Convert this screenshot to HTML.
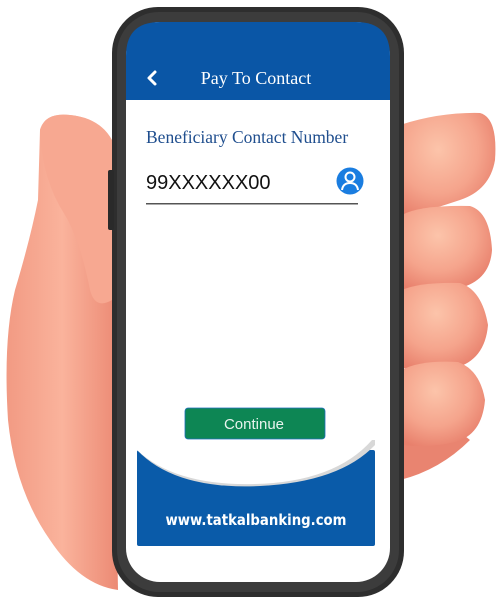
<!DOCTYPE html>
<html><head><style>
html,body{margin:0;padding:0;background:#fff;width:500px;height:600px;overflow:hidden}
</style></head><body>
<svg width="500" height="600" viewBox="0 0 500 600" xmlns="http://www.w3.org/2000/svg">
<defs>
<radialGradient id="sk" cx="0.4" cy="0.35" r="0.7">
<stop offset="0" stop-color="#fcc4aa"/><stop offset="0.6" stop-color="#f5a48c"/><stop offset="1" stop-color="#e8806c"/>
</radialGradient>
<linearGradient id="palm" x1="0" x2="1" y1="0" y2="0">
<stop offset="0" stop-color="#f29a83"/><stop offset="0.5" stop-color="#fab39c"/><stop offset="1" stop-color="#ec8a74"/>
</linearGradient>
</defs>
<path d="M40 130 Q45 112 70 115 Q100 118 110 140 L118 590 Q80 585 50 540 Q15 490 8 420 Q3 340 15 290 Q30 240 38 200 Z" fill="url(#palm)"/>
<path d="M40 130 Q45 112 70 115 Q100 118 112 140 L112 300 Q95 310 90 290 Q80 240 65 215 Q42 180 40 130Z" fill="#f7a891"/>
<path d="M400 420 L400 480 Q440 470 470 440 L420 400Z" fill="#e98470"/>
<path d="M400 125 Q440 112 480 113 Q498 118 495 160 Q490 190 460 200 Q430 210 402 218Z" fill="url(#sk)"/>
<path d="M402 215 Q420 205 470 206 Q490 212 492 250 Q490 280 460 288 Q430 292 402 290Z" fill="url(#sk)"/>
<path d="M402 290 Q420 282 460 283 Q482 290 488 325 Q485 360 455 368 Q430 372 402 368Z" fill="url(#sk)"/>
<path d="M402 370 Q420 360 458 362 Q480 370 485 400 Q482 435 455 442 Q430 448 402 445Z" fill="url(#sk)"/>
<rect x="112" y="7" width="292" height="590" rx="46" fill="#2e2e2e"/>
<rect x="117" y="12" width="282" height="580" rx="42" fill="#3c3c3c"/>
<rect x="108" y="170" width="6" height="60" rx="2" fill="#2a2a2a"/>
<rect x="126" y="22" width="264" height="560" rx="34" fill="#fff"/>
<path d="M126 100 L126 56 Q126 22 160 22 L356 22 Q390 22 390 56 L390 100Z" fill="#0a56a6"/>
<rect x="137" y="450" width="238" height="96" rx="2" fill="#0a5ba9"/>
<path d="M137 450 Q175 490 260 486 Q340 482 375 445 L375 440 L137 440Z" fill="#d8d8d8"/>
<path d="M137 450 Q175 486 255 484 Q335 482 372 440 L137 440Z" fill="#fff"/>
<path d="M155 72 L149 78 L155 84" stroke="#fff" stroke-width="3" fill="none" stroke-linecap="round" stroke-linejoin="round"/>
<text x="256" y="84" text-anchor="middle" font-family="Liberation Serif, serif" font-size="18" fill="#fff">Pay To Contact</text>
<text x="146" y="143" font-family="Liberation Serif, serif" font-size="17.5" fill="#1f4e8e">Beneficiary Contact Number</text>
<text x="146" y="189" font-family="Liberation Sans, sans-serif" font-size="20" fill="#111">99XXXXXX00</text>
<circle cx="350" cy="181" r="13.5" fill="#1a7de0"/>
<circle cx="350" cy="177" r="4.5" fill="none" stroke="#fff" stroke-width="2"/>
<path d="M342 190 Q343 183 350 183 Q357 183 358 190" fill="none" stroke="#fff" stroke-width="2"/>
<rect x="146" y="203" width="212" height="1.5" fill="#555"/>
<rect x="185" y="408" width="140" height="31" rx="3" fill="#0d8654" stroke="#1f6fbf" stroke-width="0.8"/>
<text x="254" y="429" text-anchor="middle" font-family="Liberation Sans, sans-serif" font-size="15" fill="#e8f4ee">Continue</text>
<text x="256" y="525" text-anchor="middle" font-family="DejaVu Sans, sans-serif" font-size="15" font-weight="bold" fill="#fff" textLength="181" lengthAdjust="spacingAndGlyphs">www.tatkalbanking.com</text>
</svg>
</body></html>
